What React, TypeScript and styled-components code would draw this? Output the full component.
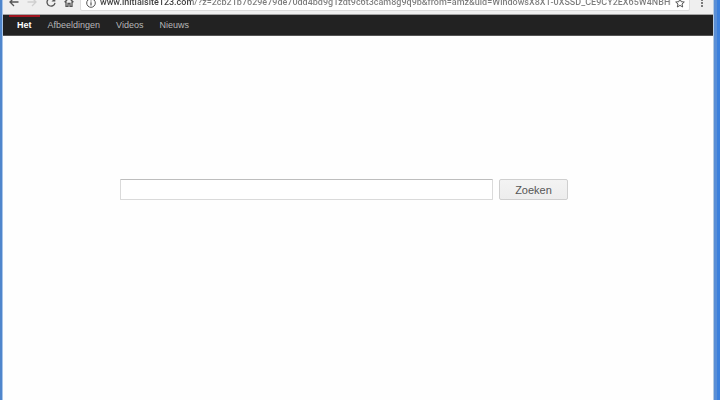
import React from "react";
import styled, { createGlobalStyle } from "styled-components";

const GlobalStyle = createGlobalStyle`
  *, *::before, *::after { box-sizing: border-box; }
  body {
    margin: 0;
    overflow: hidden;
    background: #fefefe;
    font-family: "Liberation Sans", Arial, sans-serif;
  }
`;

const Desktop = styled.div`
  display: grid;
  grid-template-columns: 3px minmax(0, 1fr) 7px;
  min-height: 100vh;
`;

const LeftEdge = styled.div`
  background: linear-gradient(90deg, #4f86cc 0 2px, #a9c6ea 2px);
`;

const RightEdge = styled.div`
  background: linear-gradient(90deg, #b5cbe2 0 1px, #5a8fd6 1px 4px, #3b80dd 4px);
`;

const Browser = styled.div`
  display: flex;
  flex-direction: column;
  background: #fefefe;
`;

const Toolbar = styled.div`
  display: flex;
  align-items: flex-end;
  height: 15px;
  padding: 0 5px 3px 4px;
  background: #efefef;
  border-bottom: 1px solid #a4a4a4;
`;

const ToolButton = styled.button<{ $width: number; $color?: string }>`
  display: flex;
  flex: none;
  justify-content: center;
  width: ${(p) => p.$width}px;
  padding: 0 0 4px;
  border: 0;
  background: none;
  color: ${(p) => p.$color ?? "#555"};

  svg { display: block; }
`;

const AddressBar = styled.div`
  display: flex;
  flex: 1;
  align-items: center;
  gap: 4px;
  min-width: 0;
  height: 17px;
  margin: 0 6px 0 2px;
  padding: 0 4px 0 5px;
  background: #fff;
  border: 1px solid #dcdcdc;
  border-radius: 2px;
  color: #555;

  svg { display: block; flex: none; }
`;

const Address = styled.input`
  flex: 1;
  min-width: 0;
  height: 15px;
  padding: 0;
  border: 0;
  outline: 0;
  font: 500 9px/15px Roboto, "Open Sans", sans-serif;
  color: transparent;
  background: linear-gradient(90deg, #3c3c3c 0 92px, #7c7c7c 92px);
  background-clip: text;
  -webkit-background-clip: text;
`;

const StarButton = styled(ToolButton)`
  padding: 0;
`;

const SiteNav = styled.nav`
  display: flex;
  height: 21px;
  padding-left: 6px;
  background: #222;
  border-bottom: 1px solid #555;
`;

const NavLink = styled.a<{ $active?: boolean }>`
  padding: 0 8px;
  border-top: 2px solid ${(p) => (p.$active ? "#a01520" : "transparent")};
  font-size: 9px;
  line-height: 16px;
  font-weight: ${(p) => (p.$active ? 700 : 400)};
  color: ${(p) => (p.$active ? "#fff" : "#b8b8b8")};
  text-decoration: none;
`;

const SearchForm = styled.form`
  display: flex;
  gap: 6px;
  margin: 143px 145px 0 117px;
`;

const SearchInput = styled.input`
  flex: 1;
  min-width: 0;
  height: 21px;
  padding: 0 6px;
  border: 1px solid #dadada;
  border-top-color: #bdbdbd;
  border-radius: 1px;
  background: #fff;
  font: 11px "Liberation Sans", Arial, sans-serif;
`;

const SearchButton = styled.button`
  width: 69px;
  height: 21px;
  padding: 0;
  border: 1px solid #cfcfcf;
  border-radius: 2px;
  background: linear-gradient(#f3f3f3, #ededed);
  color: #555;
  font: 11px "Liberation Sans", Arial, sans-serif;
`;

const stroke = { fill: "none", stroke: "currentColor", strokeWidth: 1.3 };

const links = ["Het", "Afbeeldingen", "Videos", "Nieuws"];

export default function App() {
  return (
    <>
      <GlobalStyle />
      <Desktop>
        <LeftEdge />
        <Browser>
          <Toolbar>
            <ToolButton $width={14} aria-label="Back">
              <svg width="10" height="10" viewBox="0 0 10 10" {...stroke}>
                <path d="M9.5 5H1.2M5 1 1 5l4 4" />
              </svg>
            </ToolButton>
            <ToolButton $width={22} $color="#cfcfcf" aria-label="Forward">
              <svg width="10" height="10" viewBox="0 0 10 10" {...stroke}>
                <path d="M.5 5h8.3M5 1l4 4-4 4" />
              </svg>
            </ToolButton>
            <ToolButton $width={16} aria-label="Reload">
              <svg width="10" height="10" viewBox="0 0 10 10" {...stroke}>
                <path d="M8.3 2.8A4 4 0 1 0 9 5.8" />
                <path d="M9.3.5v4H5.5z" fill="currentColor" stroke="none" />
              </svg>
            </ToolButton>
            <ToolButton $width={19} aria-label="Home">
              <svg width="10" height="10" viewBox="0 0 10 10" {...stroke}>
                <path d="M.6 5.2 5 .9l4.400 4.300M2 4.400v4.900h2V6.500h2v2.800h2V4.400" />
              </svg>
            </ToolButton>
            <AddressBar>
              <svg width="10" height="10" viewBox="0 0 10 10" fill="none" stroke="currentColor">
                <circle cx="5" cy="5" r="4.3" />
                <path d="M5 4.3v3.2M5 2.4v1.1" strokeWidth="1.2" />
              </svg>
              <Address
                aria-label="Address"
                defaultValue="www.initialsite123.com/?z=2cb21b7629e79de70dd4bd9g1zdt9c6t3cam8g9q9b&from=amz&uid=WindowsX8X1-0XSSD_CE9CY2EX65W4NBHF"
              />
              <StarButton $width={10} aria-label="Bookmark">
                <svg width="10" height="10" viewBox="0 0 10 10" fill="none" stroke="currentColor">
                  <path d="m5 .9 1.2 2.8 3.1.3-2.3 2 .7 3L5 7.4 2.3 9l.7-3L.7 4l3.1-.3z" />
                </svg>
              </StarButton>
            </AddressBar>
            <ToolButton $width={12} aria-label="Menu">
              <svg width="10" height="10" viewBox="0 0 10 10" fill="currentColor">
                <circle cx="5" cy="3" r="1" />
                <circle cx="5" cy="6" r="1" />
                <circle cx="5" cy="9" r="1" />
              </svg>
            </ToolButton>
          </Toolbar>
          <SiteNav>
            {links.map((label, i) => (
              <NavLink key={label} href="#" $active={i === 0}>
                {label}
              </NavLink>
            ))}
          </SiteNav>
          <SearchForm onSubmit={(e) => e.preventDefault()}>
            <SearchInput type="text" aria-label="Zoeken" />
            <SearchButton type="submit">Zoeken</SearchButton>
          </SearchForm>
        </Browser>
        <RightEdge />
      </Desktop>
    </>
  );
}
